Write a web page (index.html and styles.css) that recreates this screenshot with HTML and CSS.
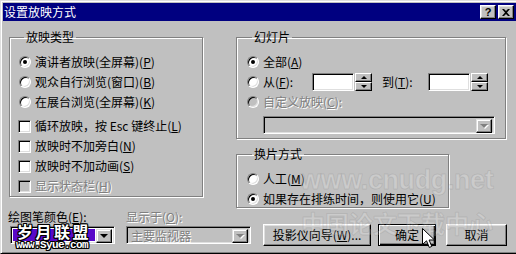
FILE: index.html
```html
<!DOCTYPE html>
<html lang="zh-CN">
<head>
    <meta charset="UTF-8">
    <meta name="viewport" content="width=device-width, initial-scale=1.0">
    <title>设置放映方式</title>
    <link rel="stylesheet" href="styles.css">
</head>
<body>
    <div class="window">
        <!-- Barre de titre -->
        <div class="titlebar">
            <span class="title">设置放映方式</span>
            <div class="title-buttons">
                <span class="tbtn">?</span>
                <span class="tbtn">
                    <svg width="8" height="7" viewBox="0 0 8 7"><path d="M0 0h2l2 2 2-2h2L5 3.5 8 7H6L4 5 2 7H0l3-3.5z" fill="#000"/></svg>
                </span>
            </div>
        </div>

        <div class="content">
            <div class="top">
                <!-- Type de diaporama -->
                <fieldset class="group group-type">
                    <legend>放映类型</legend>
                    <div class="option"><span class="radio checked"></span>演讲者放映(全屏幕)(<u>P</u>)</div>
                    <div class="option"><span class="radio"></span>观众自行浏览(窗口)(<u>B</u>)</div>
                    <div class="option"><span class="radio"></span>在展台浏览(全屏幕)(<u>K</u>)</div>
                    <div class="checks">
                        <div class="option"><span class="check"></span>循环放映，按 Esc 键终止(<u>L</u>)</div>
                        <div class="option"><span class="check"></span>放映时不加旁白(<u>N</u>)</div>
                        <div class="option"><span class="check"></span>放映时不加动画(<u>S</u>)</div>
                        <div class="option disabled"><span class="check"></span>显示状态栏(<u>H</u>)</div>
                    </div>
                </fieldset>

                <div class="right-col">
                    <!-- Diapositives -->
                    <fieldset class="group group-slides">
                        <legend>幻灯片</legend>
                        <div class="option"><span class="radio checked"></span>全部(<u>A</u>)</div>
                        <div class="option range">
                            <span class="radio"></span>
                            <span class="range-label">从(<u>F</u>):</span>
                            <span class="edit"></span>
                            <span class="spinner"><span class="sb"><i class="up"></i></span><span class="sb"><i class="down"></i></span></span>
                            <span class="range-label to">到(<u>T</u>):</span>
                            <span class="edit"></span>
                            <span class="spinner"><span class="sb"><i class="up"></i></span><span class="sb"><i class="down"></i></span></span>
                        </div>
                        <div class="option disabled"><span class="radio"></span>自定义放映(<u>C</u>):</div>
                        <div class="combo combo-custom disabled"><span class="combo-value"></span><span class="drop"><i></i></span></div>
                    </fieldset>

                    <!-- Changement de diapositive -->
                    <fieldset class="group group-advance">
                        <legend>换片方式</legend>
                        <div class="option"><span class="radio"></span>人工(<u>M</u>)</div>
                        <div class="option"><span class="radio checked"></span>如果存在排练时间，则使用它(<u>U</u>)</div>
                    </fieldset>
                </div>
            </div>

            <div class="bottom">
                <div class="field field-pen">
                    <div class="field-label">绘图笔颜色(<u>E</u>):</div>
                    <div class="combo"><span class="swatch"></span><span class="drop"><i></i></span></div>
                </div>
                <div class="field field-show disabled">
                    <div class="field-label">显示于(<u>O</u>):</div>
                    <div class="combo"><span class="combo-value">主要监视器</span><span class="drop"><i></i></span></div>
                </div>
                <div class="buttons">
                    <button class="btn btn-wizard">投影仪向导(<u>W</u>)...</button>
                    <button class="btn btn-ok">确定</button>
                    <button class="btn btn-cancel">取消</button>
                </div>
            </div>
        </div>

        <!-- Filigranes et curseur par-dessus la boîte -->
        <div class="mark mark-site">www.cnudg.net</div>
        <div class="mark mark-cn">中国论文下载中心</div>
        <div class="stamp stamp-name">岁月联盟</div>
        <div class="stamp stamp-url">www.Syue.com</div>
        <svg class="cursor" width="14" height="22" viewBox="0 0 14 22">
            <path d="M0.5 0.5V16.5L4.5 12.8L7.3 19.5L9.8 18.4L7.1 12H12.5Z" fill="#fff" stroke="#000" stroke-width="1"/>
        </svg>
    </div>
</body>
</html>
```

FILE: styles.css
```css
* {
    box-sizing: border-box;
}
body {
    margin: 0;
    background: #c0c0c0;
    overflow: hidden;
    font: 12px/14px "Noto Sans CJK SC", sans-serif;
    color: #000;
}
u {
    text-decoration: underline;
    text-underline-offset: 1px;
}
.window {
    position: relative;
    width: 519px;
    height: 254px;
    padding: 2px 3px 3px 2px;
    background: #c0c0c0;
    border-top: 1px solid #dfdfdf;
    border-left: 1px solid #dfdfdf;
    border-bottom: 1px solid #000;
    box-shadow: inset 1px 1px #fff, inset 0 -1px #808080;
}

/* Barre de titre */
.titlebar {
    height: 18px;
    background: #000080;
    color: #fff;
    display: flex;
    align-items: center;
    justify-content: space-between;
    padding: 0 2px 0 1px;
}
.title {
    line-height: 18px;
}
.title-buttons {
    display: flex;
    gap: 2px;
}
.tbtn {
    width: 16px;
    height: 14px;
    background: #c0c0c0;
    border: 1px solid;
    border-color: #fff #000 #000 #fff;
    box-shadow: inset -1px -1px #808080, inset 1px 1px #dfdfdf;
    color: #000;
    font: bold 11px/12px "Liberation Sans", sans-serif;
    display: flex;
    align-items: center;
    justify-content: center;
}

/* Contenu */
.content {
    padding: 9px 10px 0 6px;
}
.top {
    display: flex;
    gap: 33px;
    height: 178px;
}
.group {
    margin: 0;
    padding: 0;
    min-width: 0;
    border: 1px solid #808080;
    box-shadow: 1px 1px #fff, inset 1px 1px #fff;
}
.group legend {
    margin-left: 6px;
    padding: 0 2px;
    line-height: 14px;
}
.group-type {
    width: 194px;
    height: 167px;
    padding: 8px 0 6px 8px;
}
.checks {
    margin-top: 4px;
}
.right-col {
    width: 270px;
}
.group-slides {
    height: 109px;
    padding: 8px 0 10px 9px;
}
.group-advance {
    width: 213px;
    height: 61px;
    margin-top: 8px;
    padding: 8px 0 0 9px;
}
.option {
    height: 20px;
    display: flex;
    align-items: center;
    white-space: nowrap;
}
.disabled,
.disabled .combo-value {
    color: #808080;
    text-shadow: 1px 1px #fff;
}

/* Boutons radio et cases */
.radio {
    position: relative;
    width: 12px;
    height: 12px;
    margin: 0 4px 0 1px;
    flex: none;
    border-radius: 50%;
    background: #fff;
    border: 1px solid;
    border-color: #808080 #fff #fff #808080;
    box-shadow: inset 1px 1px #000, inset -1px -1px #dfdfdf;
}
.radio.checked::after {
    content: "";
    position: absolute;
    left: 3px;
    top: 3px;
    width: 4px;
    height: 4px;
    border-radius: 50%;
    background: #000;
}
.check {
    width: 13px;
    height: 13px;
    margin-right: 4px;
    flex: none;
    background: #fff;
    border: 1px solid;
    border-color: #808080 #fff #fff #808080;
    box-shadow: inset 1px 1px #000, inset -1px -1px #dfdfdf;
}
.disabled .radio,
.disabled .check {
    background: #c0c0c0;
}

/* Plage de diapositives */
.range-label {
    width: 49px;
}
.range-label.to {
    width: 46px;
    margin-left: 10px;
}
.edit {
    width: 42px;
    height: 18px;
    background: #fff;
    border: 1px solid;
    border-color: #808080 #fff #fff #808080;
    box-shadow: inset 1px 1px #000, inset -1px -1px #dfdfdf;
}
.spinner {
    width: 17px;
    height: 18px;
    margin-left: 1px;
    display: flex;
    flex-direction: column;
}
.sb {
    flex: 1;
    background: #c0c0c0;
    border: 1px solid;
    border-color: #fff #000 #000 #fff;
    box-shadow: inset -1px -1px #808080;
    display: flex;
    align-items: center;
    justify-content: center;
}
.sb i {
    width: 0;
    height: 0;
    border-left: 3px solid transparent;
    border-right: 3px solid transparent;
}
.sb .up {
    border-bottom: 3px solid #000;
}
.sb .down {
    border-top: 3px solid #000;
}

/* Listes déroulantes */
.combo {
    height: 18px;
    display: flex;
    padding: 2px;
    background: #fff;
    border: 1px solid;
    border-color: #808080 #fff #fff #808080;
    box-shadow: inset 1px 1px #000, inset -1px -1px #dfdfdf;
}
.combo.disabled,
.disabled .combo {
    background: #c0c0c0;
}
.combo-value {
    flex: 1;
    line-height: 14px;
    padding-left: 2px;
}
.drop {
    width: 16px;
    height: 14px;
    background: #c0c0c0;
    border: 1px solid;
    border-color: #dfdfdf #000 #000 #dfdfdf;
    box-shadow: inset -1px -1px #808080, inset 1px 1px #fff;
    display: flex;
    align-items: center;
    justify-content: center;
}
.drop i {
    width: 0;
    height: 0;
    border-left: 4px solid transparent;
    border-right: 4px solid transparent;
    border-top: 4px solid #000;
}
.disabled .drop i {
    border-top-color: #808080;
    filter: drop-shadow(1px 1px 0 #fff);
}
.combo-custom {
    width: 232px;
    margin-top: 4px;
    margin-left: 17px;
}

/* Rangée du bas */
.bottom {
    display: flex;
    align-items: flex-start;
    margin-left: -1px;
    padding-top: 2px;
}
.field-label {
    height: 14px;
    white-space: nowrap;
}
.field .combo {
    margin-top: 2px;
}
.field-pen .combo {
    width: 105px;
    margin-left: 2px;
}
.swatch {
    flex: 1;
    margin-right: 1px;
    background: #5808c8;
}
.field-show {
    margin-left: 11px;
}
.field-show .combo {
    width: 125px;
}
.buttons {
    display: flex;
    margin-left: 12px;
    margin-top: 14px;
}
.btn {
    height: 22px;
    padding: 0;
    font: inherit;
    color: #000;
    background: #c0c0c0;
    border: 1px solid;
    border-color: #fff #000 #000 #fff;
    box-shadow: inset -1px -1px #808080, inset 1px 1px #dfdfdf;
}
.btn-wizard {
    width: 108px;
}
.btn-ok {
    width: 58px;
    margin-left: 7px;
    border-color: #000;
    box-shadow: inset 1px 1px #fff, inset -1px -1px #000, inset -2px -2px #808080;
}
.btn-cancel {
    width: 61px;
    margin-left: 10px;
}

/* Filigranes */
.mark {
    position: absolute;
    color: rgba(255, 255, 255, 0.2);
    -webkit-text-stroke: 1px rgba(128, 128, 128, 0.22);
    font-weight: bold;
    white-space: nowrap;
    pointer-events: none;
}
.mark-site {
    left: 299px;
    top: 164px;
    font: bold 27px/30px "Liberation Sans", sans-serif;
    letter-spacing: -0.4px;
}
.mark-cn {
    left: 300px;
    top: 207px;
    font-size: 24px;
    line-height: 30px;
}
.stamp {
    position: absolute;
    color: #fff;
    font-weight: bold;
    white-space: nowrap;
    text-shadow: 1px 0 #000, -1px 0 #000, 0 1px #000, 0 -1px #000, 1px 1px #000, -1px -1px #000, 1px -1px #000, -1px 1px #000;
}
.stamp-name {
    left: 16px;
    top: 220px;
    font-size: 16px;
    line-height: 20px;
    letter-spacing: 2.5px;
}
.stamp-url {
    left: 15px;
    top: 237px;
    font: bold 11px/14px "Liberation Mono", monospace;
    letter-spacing: -0.6px;
}
.cursor {
    position: absolute;
    left: 421px;
    top: 227px;
}
```
